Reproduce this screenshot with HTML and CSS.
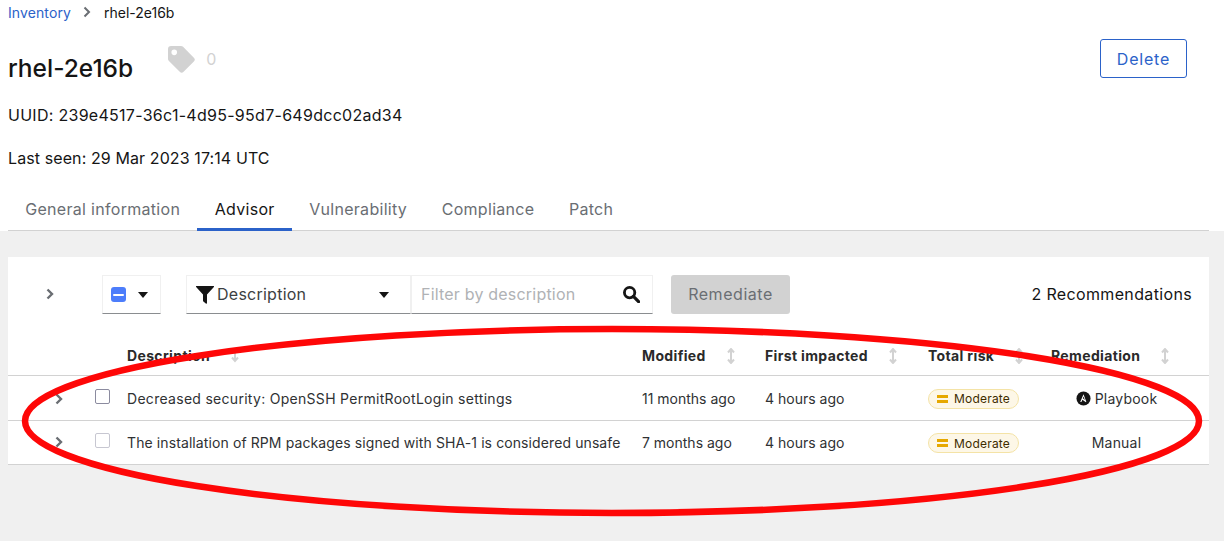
FILE: index.html
```html
<!DOCTYPE html>
<html lang="en">
<head>
<meta charset="utf-8">
<title>rhel-2e16b</title>
<link rel="stylesheet" href="styles.css">
</head>
<body>
<div class="page">
  <header class="head">
    <nav class="crumbs"><a class="crumb-link">Inventory</a>
      <svg class="crumb-sep" viewBox="0 0 10 12"><path d="M2.5 1.5 7 6l-4.5 4.5" fill="none" stroke="#6a6e73" stroke-width="2"/></svg>
      <span>rhel-2e16b</span></nav>
    <div class="title-row">
      <div class="title-main">
        <h1 class="title">rhel-2e16b</h1>
        <svg class="tag-icon" viewBox="0 0 26 26"><path d="M0 3a3 3 0 0 1 3-3h9.5c.8 0 1.5.3 2 .8l10.4 10.4a2.6 2.6 0 0 1 0 3.7l-9.9 9.9a2.6 2.6 0 0 1-3.7 0L.9 14.5c-.6-.6-.9-1.3-.9-2zM6 3.4a2.7 2.7 0 1 0 0 5.4 2.7 2.7 0 0 0 0-5.4z" fill="#d2d2d2" fill-rule="evenodd"/></svg>
        <span class="tag-count">0</span>
      </div>
      <button class="delete">Delete</button>
    </div>
    <p class="meta uuid">UUID: 239e4517-36c1-4d95-95d7-649dcc02ad34</p>
    <p class="meta seen">Last seen: 29 Mar 2023 17:14 UTC</p>
    <div class="tabs">
      <span class="tab">General information</span>
      <span class="tab active">Advisor</span>
      <span class="tab">Vulnerability</span>
      <span class="tab">Compliance</span>
      <span class="tab">Patch</span>
    </div>
  </header>
  <main class="main">
    <section class="card">
      <div class="toolbar">
        <svg class="chev tool-chev" viewBox="0 0 10 12"><path d="M2.5 1.5 7 6l-4.5 4.5" fill="none" stroke="#6a6e73" stroke-width="2.4"/></svg>
        <div class="bulk">
          <span class="mixed"><span class="mixed-bar"></span></span>
          <span class="caret"></span>
        </div>
        <div class="filter">
          <svg class="funnel" viewBox="0 0 18 18"><path d="M.5 0h17c.5 0 .7.5.4.9L11 8.5V17c0 .8-.7 1-1.2.6L7.4 15.6c-.3-.2-.4-.5-.4-.8V8.5L.1.9C-.2.5 0 0 .5 0z" fill="#151515"/></svg>
          <span class="filter-label">Description</span>
          <span class="caret"></span>
        </div>
        <div class="search">
          <span class="placeholder">Filter by description</span>
          <svg class="mag" viewBox="0 0 18 18"><circle cx="7" cy="7" r="5.5" fill="none" stroke="#151515" stroke-width="3"/><path d="m11 11 5.5 5.5" stroke="#151515" stroke-width="3.4" stroke-linecap="round"/></svg>
        </div>
        <button class="remediate">Remediate</button>
        <span class="count">2 Recommendations</span>
      </div>
      <table class="table">
        <colgroup>
          <col class="c-exp"><col class="c-check"><col class="c-desc"><col class="c-mod"><col class="c-first"><col class="c-risk"><col class="c-rem">
        </colgroup>
        <thead>
          <tr>
            <th></th><th></th>
            <th><span class="th-in">Description<svg class="sort" viewBox="0 0 10 16"><path d="M5 3v9M2 9.5l3 3.5 3-3.5" fill="none" stroke="#d2d2d2" stroke-width="2"/></svg></span></th>
            <th><span class="th-in">Modified<svg class="sort" viewBox="0 0 10 16"><path d="M5 2v12M2 4.5 5 1l3 3.5M2 11.5 5 15l3-3.5" fill="none" stroke="#d2d2d2" stroke-width="2"/></svg></span></th>
            <th><span class="th-in">First impacted<svg class="sort" viewBox="0 0 10 16"><path d="M5 2v12M2 4.5 5 1l3 3.5M2 11.5 5 15l3-3.5" fill="none" stroke="#d2d2d2" stroke-width="2"/></svg></span></th>
            <th><span class="th-in">Total risk<svg class="sort" viewBox="0 0 10 16"><path d="M5 2v12M2 4.5 5 1l3 3.5M2 11.5 5 15l3-3.5" fill="none" stroke="#d2d2d2" stroke-width="2"/></svg></span></th>
            <th><span class="th-in">Remediation<svg class="sort" viewBox="0 0 10 16"><path d="M5 2v12M2 4.5 5 1l3 3.5M2 11.5 5 15l3-3.5" fill="none" stroke="#d2d2d2" stroke-width="2"/></svg></span></th>
          </tr>
        </thead>
        <tbody>
          <tr class="r1">
            <td class="exp"><svg class="chev" viewBox="0 0 10 12"><path d="M2.5 1.5 7 6l-4.5 4.5" fill="none" stroke="#6a6e73" stroke-width="2.4"/></svg></td>
            <td class="chk"><span class="box"></span></td>
            <td class="d1">Decreased security: OpenSSH PermitRootLogin settings</td>
            <td>11 months ago</td>
            <td>4 hours ago</td>
            <td class="risk"><span class="badge"><span class="eq"></span>Moderate</span></td>
            <td class="rem"><svg class="ansible" viewBox="0 0 16 16"><circle cx="8" cy="8" r="7.5" fill="#151515"/><path d="M8 3.4 4.5 11.6h1.3l1-2.4 3.4 2.6c.5.3.9 0 .7-.5zm0 2.5 1.5 3.6-2.2-1.700z" fill="#fff" fill-rule="evenodd"/></svg>Playbook</td>
          </tr>
          <tr class="r2">
            <td class="exp"><svg class="chev" viewBox="0 0 10 12"><path d="M2.5 1.5 7 6l-4.5 4.5" fill="none" stroke="#6a6e73" stroke-width="2.4"/></svg></td>
            <td class="chk"><span class="box off"></span></td>
            <td class="d2">The installation of RPM packages signed with SHA-1 is considered unsafe</td>
            <td>7 months ago</td>
            <td>4 hours ago</td>
            <td class="risk"><span class="badge"><span class="eq"></span>Moderate</span></td>
            <td class="rem">Manual</td>
          </tr>
        </tbody>
      </table>
    </section>
  </main>
  <svg class="annotation" viewBox="0 0 1224 541"><ellipse cx="612" cy="421" rx="587" ry="92" fill="none" stroke="#fe0707" stroke-width="6.5"/></svg>
</div>
</body>
</html>
```
FILE: styles.css
```css
* { box-sizing: border-box; }
html, body { margin: 0; height: 100%; }
body { font-family: Inter, "Liberation Sans", sans-serif; color: #151515; background: #f0f0f0; overflow: hidden; }
.page { position: relative; width: 1224px; height: 541px; display: flex; flex-direction: column; }

.head { background: #fff; padding: 0 15px 0 8px; height: 231px; flex: none; }
.crumbs { display: flex; align-items: center; height: 26px; padding-bottom: 2px; font-size: 14px; }
.crumb-link { color: #2b62c9; letter-spacing: .1px; }
.crumb-sep { width: 10px; height: 12px; margin: 0 12px 0 11px; }
.title-row { display: flex; justify-content: space-between; align-items: flex-start; height: 62px; }
.title-main { display: flex; align-items: flex-start; }
.title { margin: 24px 0 0; font-size: 24.5px; font-weight: 500; line-height: 36px; }
.tag-icon { width: 27px; height: 27px; margin: 20px 0 0 35px; }
.tag-count { margin: 22px 0 0 11px; font-size: 16px; line-height: 22px; color: #d2d2d2; }
.delete { margin: 13px 22px 0 0; width: 87px; height: 39px; background: #fff; border: 1px solid #2b62c9; border-radius: 3px; color: #2b62c9; font: 16px Inter, sans-serif; letter-spacing: .8px; }
.meta { margin: 0; font-size: 16px; line-height: 24px; }
.uuid { margin-top: 15px; letter-spacing: .28px; }
.seen { margin-top: 19px; letter-spacing: .1px; }
.tabs { display: flex; margin-top: 19px; border-bottom: 1px solid #d2d2d2; height: 42px; }
.tab { padding: 0 17.25px; line-height: 40px; height: 42px; font-size: 16px; color: #6a6e73; letter-spacing: .3px; }
.active { color: #151515; border-bottom: 3px solid #2b62c9; }

.main { padding: 26px 15px 0 8px; }
.card { background: #fff; height: 207px; }
.toolbar { display: flex; align-items: flex-start; height: 78px; padding: 18px 17px 0 37px; }
.tool-chev { margin: 13px 47px 0 0; }
.chev { width: 10px; height: 12px; display: block; }
.bulk { width: 59px; height: 39px; display: flex; align-items: center; padding-left: 8px; gap: 12px; border: 1px solid #f0f0f0; border-bottom-color: #8a8d90; flex: none; }
.mixed { width: 15px; height: 15px; border-radius: 3px; background: #4c7dfb; display: flex; align-items: center; justify-content: center; }
.mixed-bar { width: 11px; height: 2px; background: #fff; border-radius: 1px; }
.caret { width: 0; height: 0; border-left: 5.5px solid transparent; border-right: 5.5px solid transparent; border-top: 6px solid #151515; }
.filter { margin-left: 25px; width: 225px; height: 39px; display: flex; align-items: center; padding: 0 21px 0 9px; border: 1px solid #f0f0f0; border-bottom-color: #8a8d90; font-size: 16px; flex: none; }
.funnel { width: 18px; height: 18px; margin-right: 3px; }
.filter-label { flex: 1; color: #3c3f42; letter-spacing: .25px; padding-bottom: 2px; }
.search { width: 242px; height: 39px; display: flex; align-items: center; justify-content: space-between; padding: 0 12px 0 9px; border: 1px solid #f0f0f0; border-bottom-color: #8a8d90; flex: none; }
.placeholder { font-size: 16px; color: #b0b2b5; letter-spacing: .2px; padding-bottom: 2px; }
.mag { width: 17px; height: 17px; }
.remediate { margin-left: 18px; width: 119px; height: 39px; border: 0; border-radius: 3px; padding: 0 0 2px; background: #d2d2d2; color: #6a6e73; font: 16px Inter, sans-serif; letter-spacing: .55px; flex: none; }
.count { margin: 9px 0 0 auto; font-size: 16px; letter-spacing: .35px; }

.table { width: 100%; table-layout: fixed; border-collapse: collapse; font-size: 14px; }
.c-exp { width: 75px; } .c-check { width: 44px; } .c-desc { width: 515px; } .c-mod { width: 123px; } .c-first { width: 163px; } .c-risk { width: 123px; } .c-rem { width: 158px; }
th { height: 40px; padding: 2px 0 0; text-align: left; font-weight: 700; color: #2a2a2a; vertical-align: middle; letter-spacing: .35px; }
th, td { border-bottom: 1px solid #d2d2d2; }
td { padding: 0; vertical-align: middle; color: #2f3133; }
.r1 td { height: 45px; padding-top: 2px; }
.r2 td { height: 44px; }
.r2 .risk { padding-top: 2px; }
.d1 { letter-spacing: .29px; }
.d2 { letter-spacing: .1px; }
.th-in { display: flex; align-items: center; gap: 20px; }
.sort { width: 10px; height: 16px; flex: none; }
.exp { padding-left: 46px; }
.chk { padding-left: 12px; }
.box { display: block; width: 15px; height: 15px; border: 1.5px solid #8b8b9f; border-radius: 2px; margin: -4px 0 0 0; }
.r1 .box { margin-top: -5px; }
.box.off { border-color: #c7c7d1; }
.badge { display: inline-flex; align-items: center; width: 91px; height: 20px; padding-left: 8px; border: 1px solid #f4e3a6; border-radius: 10px; background: #fdf7e7; font-size: 12px; color: #3d2c00; letter-spacing: .2px; vertical-align: middle; }
.eq { width: 11px; height: 8px; margin-right: 6px; border-top: 3px solid #e6a800; border-bottom: 3px solid #e6a800; }
.rem { text-align: center; padding-right: 27px; letter-spacing: .2px; }
.ansible { width: 15px; height: 15px; vertical-align: -2px; margin-right: 4px; }

.annotation { position: absolute; left: 0; top: 0; width: 1224px; height: 541px; pointer-events: none; }
```
